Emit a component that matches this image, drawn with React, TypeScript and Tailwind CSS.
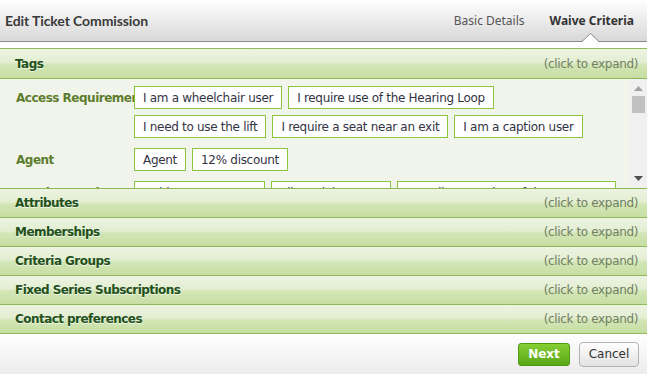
const sectionBg =
  'bg-[linear-gradient(to_bottom,#edf3e2_0%,#e3eed2_45%,#d2e6b6_55%,#c6dea3_100%)]';

type TagItem = { text: string; width?: string };
type TagGroup = { label: string; tags: TagItem[] };

const tagGroups: TagGroup[] = [
  {
    label: 'Access Requirements',
    tags: [
      { text: 'I am a wheelchair user' },
      { text: 'I require use of the Hearing Loop' },
      { text: 'I need to use the lift' },
      { text: 'I require a seat near an exit' },
      { text: 'I am a caption user' },
    ],
  },
  { label: 'Agent', tags: [{ text: 'Agent' }, { text: '12% discount' }] },
  {
    label: 'Loyalty Level',
    tags: [
      { text: 'Gold supporter', width: 'w-[131px]' },
      { text: 'Silver club', width: 'w-[120px]' },
      { text: 'Founding member of the trust', width: 'w-[219px]' },
    ],
  },
];

const sections = [
  'Attributes',
  'Memberships',
  'Criteria Groups',
  'Fixed Series Subscriptions',
  'Contact preferences',
];

function SectionHeader({ title, className = 'h-[29px]' }: { title: string; className?: string }) {
  return (
    <div
      className={`flex shrink-0 items-center justify-between border-b border-[#8fba5a] pl-[15px] pr-[9px] ${sectionBg} ${className}`}
    >
      <span className="font-bold tracking-[-0.55px] text-[#22501a] [text-shadow:0_1px_0_rgba(255,255,255,0.7)]">
        {title}
      </span>
      <span className="tracking-[-0.35px] text-[#717f63]">(click to expand)</span>
    </div>
  );
}

function Tag({ text, width = '' }: TagItem) {
  return (
    <span
      className={`flex h-[23px] items-center overflow-hidden whitespace-nowrap border border-[#8cc63f] bg-white px-[8px] tracking-[-0.3px] text-[#333344] ${width}`}
    >
      {text}
    </span>
  );
}

function Scrollbar() {
  return (
    <div className="relative w-[17px] shrink-0 bg-[#f0f0f0]">
      <svg className="absolute left-[4px] top-[7px]" width="9" height="6" viewBox="0 0 9 6">
        <polygon points="4.5,0 9,5 0,5" fill="#a3a3a3" />
      </svg>
      <div className="absolute left-[2px] top-[17px] h-[17px] w-[13px] bg-[#c1c1c1]" />
      <svg className="absolute bottom-[6px] left-[4px]" width="9" height="6" viewBox="0 0 9 6">
        <polygon points="0,0 9,0 4.5,5" fill="#505050" />
      </svg>
    </div>
  );
}

export default function App() {
  return (
    <div className="flex h-[374px] w-[647px] flex-col overflow-hidden bg-white font-['DejaVu_Sans',sans-serif] text-[12px]">
      <header className="relative flex h-[42px] shrink-0 items-center justify-between border-b border-[#8a8a8a] bg-gradient-to-b from-white to-[#d8d8d8] pl-[5px] pr-[13px] font-['Lato',sans-serif]">
        <h1 className="text-[14px] font-bold tracking-[-0.1px] text-[#3a3a3a]">Edit Ticket Commission</h1>
        <nav className="flex items-center gap-[25px] font-['Noto_Sans',sans-serif] text-[12px]">
          <span className="text-[#555]">Basic Details</span>
          <span className="font-bold text-[#333]">Waive Criteria</span>
        </nav>
        <svg className="absolute bottom-[-1px] left-[582px]" width="17" height="9" viewBox="0 0 17 9">
          <polygon points="0,8.5 8.5,0.5 17,8.5" fill="#ffffff" />
          <polyline points="0,8.5 8.5,0.5 17,8.5" fill="none" stroke="#8a8a8a" strokeWidth="1" />
          <rect x="1" y="8" width="15" height="1" fill="#ffffff" />
        </svg>
      </header>

      <div className="h-[6px] shrink-0 bg-white" />

      <SectionHeader title="Tags" className="h-[31px] border-t" />

      <div className="flex h-[110px] shrink-0 overflow-hidden border-b border-[#8fba5a] bg-[#f1f4ea]">
        <div className="flex flex-1 flex-col gap-[10px] overflow-hidden pl-[16px] pt-[7px]">
          {tagGroups.map((group) => (
            <div key={group.label} className="flex">
              <div className="flex h-[23px] w-[118px] shrink-0 items-center overflow-hidden whitespace-nowrap font-bold tracking-[-0.5px] text-[#5c7d2e]">
                {group.label}
              </div>
              <div className="flex w-[492px] flex-wrap gap-[6px]">
                {group.tags.map((tag) => (
                  <Tag key={tag.text} {...tag} />
                ))}
              </div>
            </div>
          ))}
        </div>
        <Scrollbar />
      </div>

      {sections.map((s) => (
        <SectionHeader key={s} title={s} />
      ))}

      <footer className="flex flex-1 items-center justify-end gap-[9px] bg-gradient-to-b from-white to-[#ececec] pr-[8px]">
        <button className="h-[23px] w-[52px] rounded-[3px] border border-[#4f9a12] bg-gradient-to-b from-[#86d034] to-[#5aa616] font-bold text-white">
          Next
        </button>
        <button className="h-[25px] w-[60px] rounded-[4px] border border-[#b3b3b3] bg-gradient-to-b from-white to-[#e2e2e2] text-[#333]">
          Cancel
        </button>
      </footer>
    </div>
  );
}
